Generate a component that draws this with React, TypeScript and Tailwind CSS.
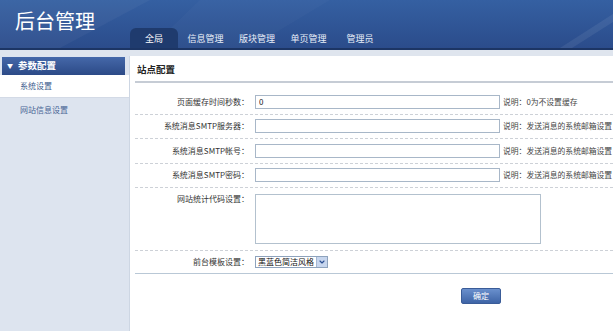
import React from 'react';
import { ChevronDown } from 'lucide-react';

const tabs = ['全局', '信息管理', '版块管理', '单页管理', '管理员'];

const rows = [
  { label: '页面缓存时间秒数：', value: '0', note: '说明：0为不设置缓存' },
  { label: '系统消息SMTP服务器：', value: '', note: '说明：发送消息的系统邮箱设置' },
  { label: '系统消息SMTP帐号：', value: '', note: '说明：发送消息的系统邮箱设置' },
  { label: '系统消息SMTP密码：', value: '', note: '说明：发送消息的系统邮箱设置' },
];

export default function App() {
  return (
    <div className="h-[331px] w-full overflow-hidden bg-white flex flex-col font-['Noto_Sans_CJK_SC','Noto_Sans',sans-serif]">
      {/* Header */}
      <div className="relative h-[50px] shrink-0 bg-gradient-to-b from-[#3560a2] to-[#2b4c8b] border-b-2 border-[#1c3564] overflow-hidden">
        <svg className="absolute inset-0 w-full h-full" viewBox="0 0 613 48" preserveAspectRatio="none">
          <polygon points="0,0 150,0 60,48 0,48" fill="#ffffff" opacity="0.04" />
          <polygon points="200,0 330,0 250,48 150,48" fill="#ffffff" opacity="0.025" />
          <polygon points="560,48 613,14 613,22 572,48" fill="#ffffff" opacity="0.07" />
        </svg>
        <div className="relative flex h-full">
          <div className="w-[130px] shrink-0 pl-[15px] pt-[11px]">
            <h1 className="text-[20px] leading-none text-white">后台管理</h1>
          </div>
          <div className="flex items-end gap-[3.5px]">
            {tabs.map((t, i) => (
              <div
                key={t}
                className={`w-[48px] h-[20px] flex items-center justify-center text-[9px] leading-none ${
                  i === 0 ? 'bg-[#1f3b6e] rounded-t-[6px] text-white' : 'text-[#e8eef8]'
                }`}
              >
                {t}
              </div>
            ))}
          </div>
        </div>
      </div>
      <div className="h-[6px] shrink-0 bg-[#dfe5ee]" />

      <div className="flex flex-1 min-h-0">
        {/* Sidebar */}
        <div className="w-[130px] shrink-0 bg-[#dde4ef] border-r border-[#cdd6e3]">
          <div className="mt-[1px] ml-[2px] mr-[4px] h-[18px] flex items-center pl-[5px] bg-gradient-to-b from-[#4568a9] to-[#2c4a87]">
            <span className="text-[6px] text-white leading-none">▼</span>
            <span className="ml-[5px] text-[9.5px] font-bold text-white leading-none">参数配置</span>
          </div>
          <div className="h-[23px] bg-white flex items-center pl-[20px] text-[8px] text-[#3b5a8c] border-b border-[#d3dae6]">
            系统设置
          </div>
          <div className="h-[24px] flex items-center pl-[20px] text-[8px] text-[#4a6496]">网站信息设置</div>
        </div>

        {/* Content */}
        <div className="flex-1 min-w-0 pl-[5px]">
          <div className="h-[27px] border-b-2 border-[#c6ccd5] flex items-center pl-[2px] pt-[1px] text-[9.5px] font-bold text-[#222]">
            站点配置
          </div>
          <div className="mt-[7px]">
            {rows.map((r) => (
              <div key={r.label} className="h-[24.5px] flex items-center border-b border-dashed border-[#cdd1d7]">
                <div className="w-[120px] shrink-0 text-right pr-[6px] text-[8px] text-[#333]">{r.label}</div>
                <input
                  readOnly
                  value={r.value}
                  className="w-[245px] h-[14px] shrink-0 border border-[#a8b7c8] px-[3px] text-[8px] text-[#222] outline-none"
                />
                <span className="ml-[3px] whitespace-nowrap text-[7.8px] text-[#444]">{r.note}</span>
              </div>
            ))}
            <div className="h-[63px] flex items-start pt-[6px] border-b border-dashed border-[#cdd1d7]">
              <div className="w-[120px] shrink-0 text-right pr-[6px] text-[8px] leading-[10px] text-[#333]">网站统计代码设置：</div>
              <textarea
                readOnly
                className="w-[286px] h-[50px] shrink-0 border border-[#b3c1ce] outline-none resize-none"
              />
            </div>
            <div className="h-[23px] flex items-center border-b border-[#b9c8d6]">
              <div className="w-[120px] shrink-0 text-right pr-[6px] text-[8px] text-[#333]">前台模板设置：</div>
              <div className="w-[73px] h-[12px] flex items-center border border-[#8ea3bd] bg-white">
                <span className="flex-1 pl-[2px] text-[8px] leading-none text-[#111]">黑蓝色简洁风格</span>
                <span className="w-[11px] h-full flex items-center justify-center bg-[#c7d6ee] border-l border-[#a3b7d4]">
                  <ChevronDown className="w-[8px] h-[8px] text-[#2b4f93]" strokeWidth={3.5} />
                </span>
              </div>
            </div>
            <div className="pt-[6px] pl-[326px]">
              <button className="w-[40px] h-[16px] rounded-[2px] bg-gradient-to-b from-[#6a90cd] to-[#3e64a6] border border-[#3a5c98] text-[8px] leading-none text-white">
                确定
              </button>
            </div>
          </div>
        </div>
      </div>
    </div>
  );
}
